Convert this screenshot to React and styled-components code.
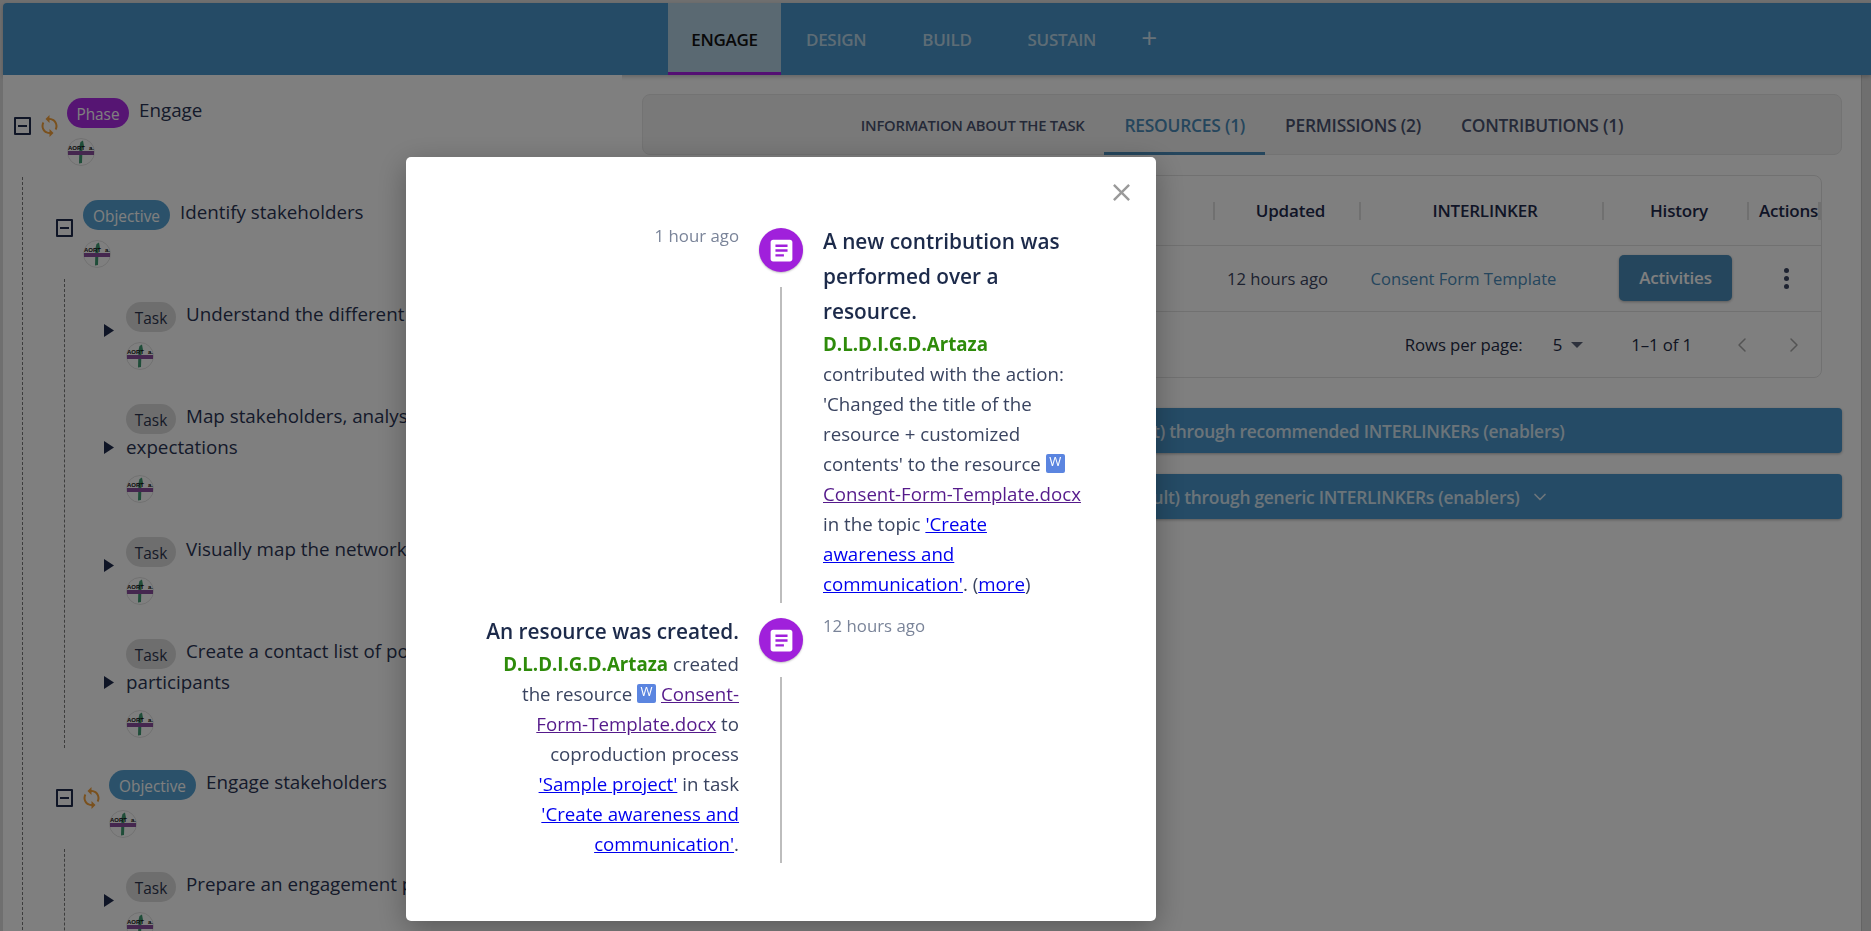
import styled, { createGlobalStyle } from "styled-components";
import { ChevronDown, ChevronLeft, ChevronRight } from "lucide-react";

const GlobalStyle = createGlobalStyle`
  html, body {
    margin: 0;
    padding: 0;
    background: #dedede;
  }
  * {
    box-sizing: border-box;
  }
  body {
    font-family: "Open Sans", "Noto Sans", sans-serif;
    color: #172b4d;
  }
`;

const PHASE_TABS = ["ENGAGE", "DESIGN", "BUILD", "SUSTAIN"];
const chipStyles = {
  Phase: { bg: "#a81fe6", fg: "#ffffff", width: 62 },
  Objective: { bg: "#4f9fd2", fg: "#ffffff", width: 87 },
  Task: { bg: "#dcdcdc", fg: "#222b45", width: 50 },
};

function SyncIcon() {
  return (
    <SyncSvg viewBox="4 1 16 22">
      <path d="M12 4V1L8 5l4 4V6c3.31 0 6 2.69 6 6 0 1.01-.25 1.97-.7 2.8l1.46 1.46C19.54 15.03 20 13.57 20 12c0-4.42-3.58-8-8-8zm0 14c-3.31 0-6-2.69-6-6 0-1.01.25-1.97.7-2.8L5.24 7.74C4.46 8.97 4 10.43 4 12c0 4.42 3.58 8 8 8v3l4-4-4-4v3z" />
    </SyncSvg>
  );
}

function LogoAvatar() {
  return (
    <Avatar viewBox="0 0 28 28">
      <circle cx="14" cy="14" r="13.5" fill="#ffffff" stroke="#e2e2e2" />
      <path d="M12.5 8 L13.5 4 L16 2.5 L17 8 L15.5 10 L15 25 L12 25.5 Z" fill="#3f9a72" />
      <rect x="1" y="13" width="26" height="4" fill="#8a4f9e" />
      <text x="1" y="11.5" fontSize="6" fontWeight="700" fontFamily="Liberation Sans" fill="#111">
        AORT
      </text>
      <text x="22" y="11.5" fontSize="6" fontWeight="700" fontFamily="Liberation Sans" fill="#111">
        a.
      </text>
    </Avatar>
  );
}

function TreeNode({ kind, title, sync, open }) {
  return (
    <NodeRow>
      <Toggle>
        {open ? (
          <MinusBox />
        ) : (
          <svg width="13" height="15" viewBox="0 0 13 15">
            <path d="M1 1 L11 7.5 L1 14 Z" fill="#1f2a4d" />
          </svg>
        )}
      </Toggle>
      {sync && <SyncIcon />}
      <NodeBody>
        <NodeLabel>
          <Chip $kind={kind}>{kind}</Chip>
          {title}
        </NodeLabel>
        <LogoAvatar />
      </NodeBody>
    </NodeRow>
  );
}

function WordIcon() {
  return <WordBadge>W</WordBadge>;
}

function EventDot() {
  return (
    <Dot>
      <svg width="29" height="29" viewBox="0 0 24 24">
        <path
          fill="#ffffff"
          d="M19 3H5c-1.1 0-2 .9-2 2v14c0 1.1.9 2 2 2h14c1.1 0 2-.9 2-2V5c0-1.1-.9-2-2-2zm-5 14H7v-2h7v2zm3-4H7v-2h10v2zm0-4H7V7h10v2z"
        />
      </svg>
    </Dot>
  );
}

export default function App() {
  return (
    <Page>
      <GlobalStyle />
      <Header>
        {PHASE_TABS.map((tab, i) => (
          <PhaseTab key={tab} $active={i === 0}>
            {tab}
          </PhaseTab>
        ))}
        <PlusTab>+</PlusTab>
      </Header>

      <Main>
        <TreePanel>
          <TreeNode kind="Phase" title="Engage" sync open />
          <Group>
            <TreeNode kind="Objective" title="Identify stakeholders" open />
            <SubGroup>
              <TreeNode kind="Task" title="Understand the different stakeholders" />
              <TreeNode
                kind="Task"
                title="Map stakeholders, analyse their interests and expectations"
              />
              <TreeNode kind="Task" title="Visually map the network of stakeholders" />
              <TreeNode
                kind="Task"
                title="Create a contact list of potential users and participants"
              />
            </SubGroup>
            <TreeNode kind="Objective" title="Engage stakeholders" sync open />
            <SubGroup>
              <TreeNode kind="Task" title="Prepare an engagement plan for all stakeholders" />
            </SubGroup>
          </Group>
        </TreePanel>

        <DetailPanel>
          <TabsCard>
            <TaskTab $small>INFORMATION ABOUT THE TASK</TaskTab>
            <TaskTab $active>RESOURCES (1)</TaskTab>
            <TaskTab>PERMISSIONS (2)</TaskTab>
            <TaskTab>CONTRIBUTIONS (1)</TaskTab>
          </TabsCard>

          <TableCard>
            <TableRow $head>
              <HeadCell>Name</HeadCell>
              <HeadCell>Updated</HeadCell>
              <HeadCell>INTERLINKER</HeadCell>
              <HeadCell>History</HeadCell>
              <HeadCell>Actions</HeadCell>
            </TableRow>
            <TableRow>
              <BodyCell>Consent-Form-Template.docx</BodyCell>
              <BodyCell $shift={-17}>12 hours ago</BodyCell>
              <BodyCell $shift={-34}>
                <InterlinkerLink>Consent Form Template</InterlinkerLink>
              </BodyCell>
              <BodyCell>
                <ActivitiesButton>Activities</ActivitiesButton>
              </BodyCell>
              <BodyCell>
                <MoreDots>
                  <i />
                  <i />
                  <i />
                </MoreDots>
              </BodyCell>
            </TableRow>
            <Pagination>
              <span>Rows per page:</span>
              <PageSize>
                5<Caret />
              </PageSize>
              <PageRange>1–1 of 1</PageRange>
              <PageArrows>
                <ChevronLeft size={24} strokeWidth={1.5} />
                <ChevronRight size={24} strokeWidth={1.5} />
              </PageArrows>
            </Pagination>
          </TableCard>

          <AccordionBar $first>
            Create the resource (or result) through recommended INTERLINKERs (enablers)
          </AccordionBar>
          <AccordionBar>
            Create the resource (or result) through generic INTERLINKERs (enablers)
            <ChevronDown size={20} strokeWidth={2} />
          </AccordionBar>
        </DetailPanel>
      </Main>

      <Backdrop />
      <Modal>
        <CloseButton viewBox="0 0 24 24">
          <path d="M19 6.41 17.59 5 12 10.59 6.41 5 5 6.41 10.59 12 5 17.59 6.41 19 12 13.41 17.59 19 19 17.59 13.41 12z" />
        </CloseButton>

        <TimelineRow>
          <OppositeSide>
            <TimeLabel>1 hour ago</TimeLabel>
          </OppositeSide>
          <Separator>
            <EventDot />
            <Connector />
          </Separator>
          <ContentSide>
            <EventTitle>A new contribution was performed over a resource.</EventTitle>
            <EventText>
              <UserName>D.L.D.I.G.D.Artaza</UserName> contributed with the action: 'Changed the
              title of the resource + customized contents' to the resource <WordIcon />{" "}
              <VisitedLink>Consent-Form-Template.docx</VisitedLink> in the topic{" "}
              <PlainLink>'Create awareness and communication'</PlainLink>. (
              <PlainLink>more</PlainLink>)
            </EventText>
          </ContentSide>
        </TimelineRow>

        <TimelineRow>
          <OppositeSide>
            <EventTitle>An resource was created.</EventTitle>
            <EventText>
              <UserName>D.L.D.I.G.D.Artaza</UserName> created the resource <WordIcon />{" "}
              <VisitedLink>Consent-Form-Template.docx</VisitedLink> to coproduction process{" "}
              <PlainLink>'Sample project'</PlainLink> in task{" "}
              <PlainLink>'Create awareness and communication'</PlainLink>.
            </EventText>
          </OppositeSide>
          <Separator>
            <EventDot />
            <Connector />
          </Separator>
          <ContentSide>
            <TimeLabel>12 hours ago</TimeLabel>
          </ContentSide>
        </TimelineRow>
      </Modal>
    </Page>
  );
}

const Page = styled.div`
  height: 931px;
  overflow: hidden;
  padding: 3px 0 0 3px;
`;

const Header = styled.div`
  height: 72px;
  background: #4a97cc;
  border-radius: 4px 0 0 0;
  display: flex;
  padding-left: 665px;
  position: relative;
  z-index: 1;
  box-shadow: 0 2px 4px rgba(0, 0, 0, 0.2);
`;

const PhaseTab = styled.div`
  width: ${(p) => (p.$active ? "113px" : "auto")};
  margin-right: ${(p) => (p.$active ? "25px" : "56px")};
  height: 72px;
  padding-top: 3px;
  display: flex;
  align-items: center;
  justify-content: center;
  font-size: 17px;
  font-weight: 600;
  letter-spacing: -0.3px;
  color: ${(p) => (p.$active ? "#111111" : "rgba(255, 255, 255, 0.65)")};
  background: ${(p) => (p.$active ? "#b4d2e4" : "transparent")};
  border-bottom: 3px solid ${(p) => (p.$active ? "#a81fe6" : "transparent")};
`;

const PlusTab = styled.div`
  margin-left: -11px;
  font-size: 28px;
  line-height: 68px;
  height: 72px;
  color: rgba(255, 255, 255, 0.75);
`;

const Main = styled.div`
  display: flex;
  height: 856px;
`;

const TreePanel = styled.div`
  width: 619px;
  flex: none;
  overflow: hidden;
  padding: 23px 0 0 11px;
  background: #ffffff;
  position: relative;
  z-index: 2;
`;

const NodeRow = styled.div`
  display: flex;
  align-items: center;
  gap: 10px;
`;

const Toggle = styled.div`
  flex: none;
  margin-bottom: 12px;
  display: flex;
`;

const MinusBox = styled.span`
  width: 17px;
  height: 18px;
  border: 2px solid #1f2a4d;
  border-radius: 1px;
  position: relative;
  &::after {
    content: "";
    position: absolute;
    left: 2px;
    right: 2px;
    top: 6px;
    height: 2px;
    background: #1f2a4d;
  }
`;

const SyncSvg = styled.svg`
  width: 17px;
  height: 22px;
  flex: none;
  margin: 0 -1px 12px 0;
  fill: #f5a23c;
`;

const NodeBody = styled.div`
  flex: 1;
  min-width: 0;
`;

const NodeLabel = styled.div`
  font-size: 18.8px;
  line-height: 31px;
  margin-top: -3px;
  color: #2a3454;
`;

const Chip = styled.span`
  display: inline-block;
  vertical-align: top;
  width: ${(p) => chipStyles[p.$kind].width}px;
  height: 30px;
  margin: 3px 10px -2px 0;
  border-radius: 15px;
  font-size: 15.4px;
  line-height: 33px;
  text-align: center;
  background: ${(p) => chipStyles[p.$kind].bg};
  color: ${(p) => chipStyles[p.$kind].fg};
  opacity: 0.95;
`;

const Avatar = styled.svg`
  display: block;
  width: 28px;
  height: 28px;
  margin-top: 12px;
`;

const Group = styled.div`
  margin: 11px 0 0 8px;
  padding: 23px 0 0 33px;
  border-left: 1px dashed #7a7a7a;
  display: flex;
  flex-direction: column;
  gap: 22px;
`;

const SubGroup = styled.div`
  margin: -11px 0 0 8px;
  padding: 23px 0 10px 38px;
  border-left: 1px dashed #7a7a7a;
  display: flex;
  flex-direction: column;
  gap: 34px;
`;

const DetailPanel = styled.div`
  flex: 1;
  width: 1240px;
  margin-right: 9px;
  padding: 19px 19px 0 20px;
  background: #ffffff;
  border-right: 1px solid #c8c8c8;
`;

const TabsCard = styled.div`
  height: 61px;
  background: #f3f3f3;
  border: 1px solid #e6e6e6;
  border-radius: 8px;
  display: flex;
  justify-content: center;
`;

const TaskTab = styled.div`
  height: 60px;
  padding: 2px 20px 0;
  display: flex;
  align-items: center;
  font-size: ${(p) => (p.$small ? "14.8px" : "17.4px")};
  font-weight: 550;
  letter-spacing: -0.25px;
  color: ${(p) => (p.$active ? "#4a8cba" : "#4a5370")};
  border-bottom: 3px solid ${(p) => (p.$active ? "#4a8cba" : "transparent")};
`;

const TableCard = styled.div`
  margin: 20px 20px 0 0;
  height: 203px;
  border: 1px solid #e3e3e3;
  border-radius: 8px;
`;

const TableRow = styled.div`
  display: grid;
  grid-template-columns: 1fr 146px 243px 145px 74px;
  height: ${(p) => (p.$head ? "70px" : "66px")};
  align-items: center;
  border-bottom: 1px solid #e3e3e3;
`;

const HeadCell = styled.div`
  text-align: center;
  font-size: 17px;
  font-weight: 550;
  letter-spacing: -0.2px;
  color: #1f2a4d;
  border-left: 2px solid #e0e0e0;
  height: 18px;
  line-height: 18px;
  padding-left: 7px;
  white-space: nowrap;
  &:first-child {
    border-left: none;
  }
  &:last-child {
    border-right: 3px solid #e0e0e0;
    padding-left: 10px;
  }
`;

const BodyCell = styled.div`
  display: flex;
  justify-content: center;
  align-items: center;
  font-size: 16.6px;
  color: #3a4460;
  white-space: nowrap;
  padding-right: ${(p) => (p.$shift ? -p.$shift + "px" : "0")};
`;

const InterlinkerLink = styled.span`
  color: #4a8cba;
`;

const ActivitiesButton = styled.div`
  width: 113px;
  height: 46px;
  margin: -2px 0 0 2px;
  border-radius: 5px;
  background: #4a8cba;
  color: #ffffff;
  font-size: 17px;
  font-weight: 600;
  letter-spacing: -0.2px;
  display: flex;
  align-items: center;
  justify-content: center;
  box-shadow: 0 1px 3px rgba(0, 0, 0, 0.3);
`;

const MoreDots = styled.div`
  display: flex;
  flex-direction: column;
  gap: 3px;
  margin-left: 4px;
  i {
    width: 5px;
    height: 5px;
    border-radius: 50%;
    background: #3d4663;
  }
`;

const Pagination = styled.div`
  display: flex;
  justify-content: flex-end;
  align-items: center;
  height: 65px;
  padding-right: 15px;
  font-size: 16.8px;
  letter-spacing: -0.1px;
  color: #232b45;
`;

const PageSize = styled.div`
  margin-left: 30px;
  display: flex;
  align-items: center;
  gap: 9px;
`;

const Caret = styled.span`
  width: 0;
  height: 0;
  border-left: 6px solid transparent;
  border-right: 6px solid transparent;
  border-top: 6px solid #5b6378;
`;

const PageRange = styled.div`
  margin-left: 48px;
`;

const PageArrows = styled.div`
  margin-left: 38px;
  display: flex;
  gap: 28px;
  color: #a8a8a8;
`;

const AccordionBar = styled.div`
  height: 45px;
  margin-top: ${(p) => (p.$first ? "30px" : "21px")};
  background: #4a97cc;
  border-radius: 4px;
  display: flex;
  align-items: center;
  justify-content: center;
  gap: 10px;
  font-size: 17.4px;
  font-weight: 600;
  letter-spacing: -0.25px;
  color: rgba(255, 255, 255, 0.8);
  box-shadow: 0 1px 3px rgba(0, 0, 0, 0.3);
`;

const Backdrop = styled.div`
  position: fixed;
  inset: 0;
  z-index: 5;
  background: rgba(0, 0, 0, 0.5);
`;

const Modal = styled.div`
  position: fixed;
  z-index: 6;
  left: 406px;
  top: 157px;
  width: 750px;
  height: 764px;
  padding: 56px 60px 0;
  background: #ffffff;
  border-radius: 5px;
  box-shadow: 0 8px 30px rgba(0, 0, 0, 0.3);
`;

const CloseButton = styled.svg`
  position: absolute;
  top: 21px;
  right: 20px;
  width: 29px;
  height: 29px;
  fill: #9a9a9a;
`;

const TimelineRow = styled.div`
  display: flex;
`;

const OppositeSide = styled.div`
  width: 293px;
  flex: none;
  padding: 11px 20px 4px 13px;
  text-align: right;
`;

const ContentSide = styled.div`
  width: 293px;
  flex: none;
  padding: 11px 13px 4px 20px;
`;

const Separator = styled.div`
  width: 44px;
  flex: none;
  display: flex;
  flex-direction: column;
  align-items: center;
`;

const Dot = styled.div`
  width: 44px;
  height: 44px;
  flex: none;
  margin: 15px 0;
  border-radius: 50%;
  background: #a020db;
  display: flex;
  align-items: center;
  justify-content: center;
  box-shadow: 0 1px 2px rgba(0, 0, 0, 0.25);
`;

const Connector = styled.div`
  flex: 1;
  width: 2px;
  background: #bdbdbd;
`;

const TimeLabel = styled.div`
  font-size: 16.8px;
  line-height: 24px;
  color: #7a8499;
`;

const EventTitle = styled.div`
  font-size: 20.8px;
  font-weight: 560;
  line-height: 35px;
  color: #1c2a4a;
`;

const EventText = styled.div`
  font-size: 18.7px;
  line-height: 30px;
  color: #3a4460;
`;

const UserName = styled.b`
  font-weight: 700;
  color: #2e8b0a;
`;

const WordBadge = styled.span`
  display: inline-block;
  width: 19px;
  height: 19px;
  vertical-align: 5px;
  border-radius: 2px;
  background: #5b85e0;
  color: #ffffff;
  font-size: 13px;
  line-height: 15px;
  text-align: center;
`;

const VisitedLink = styled.a`
  color: #551a8b;
  text-decoration: underline;
`;

const PlainLink = styled.a`
  color: #0000ee;
  text-decoration: underline;
`;
